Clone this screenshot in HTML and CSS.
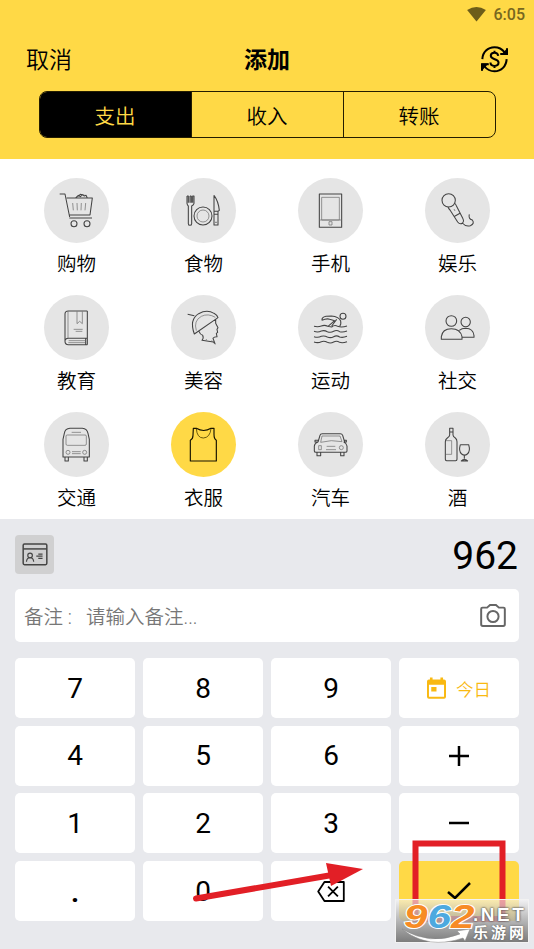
FILE: index.html
```html
<!DOCTYPE html>
<html lang="zh-CN">
<head>
<meta charset="utf-8">
<meta name="viewport" content="width=device-width">
<title>添加</title>
<link rel="stylesheet" href="styles.css">
</head>
<body>
<main class="app">
  <header class="header">
    <div class="status">
      <svg class="wifi" viewBox="0 0 20 16"><path d="M0 3.2Q10-3.2 20 3.2L10 15.5Z"/></svg>
      <span>6:05</span>
    </div>
    <div class="titlebar">
      <span class="cancel">取消</span>
      <h1>添加</h1>
      <svg class="currency" viewBox="0 0 80 80">
        <path d="M4 39C5 18 20 4 40 4c13 0 23 6 30 15M76 39c-1 21-16 36-36 36-13 0-23-6-30-15"/>
        <path d="M77 7v17H57M3 73V54h20"/>
        <path class="fill" d="M78 7v19H59zM2 74V52h20z"/>
        <path d="M51 29c-1-7-6-9-11-9-7 0-11 4-11 9 0 13 23 7 23 20 0 6-5 10-12 10s-12-4-12-10M40 14v7M40 58v7"/>
      </svg>
    </div>
    <nav class="tabs">
      <span class="tab active">支出</span>
      <span class="tab">收入</span>
      <span class="tab">转账</span>
    </nav>
  </header>

  <section class="categories">
    <div class="cat"><svg viewBox="43 25 195 195">
      <path d="M90 73h16l14 69M111 85h77l-7 51h-62M119 145h68M138 85l8-8 6 4 7-6 5 4 5-2 4 8M145 80l7-6 12 3"/>
      <path class="thin" d="M129 100l2 22M142 100l1 22M155 100l-1 22M168 100l-2 22"/>
      <circle cx="133" cy="162" r="9"/><circle cx="172" cy="162" r="9"/></svg><span>购物</span></div>
    <div class="cat"><svg viewBox="424 25 195 195">
      <path d="M472 79v22q1 6 4 8v53q0 5 5 5t5-5v-53q6-3 7-8V79h-4v20M472 79h4v20M481 79v20M485 79v20M481 79h4M553 77v89h12v-41h-11M553 77q13 17 16 45l-4 3M553 134h12"/>
      <circle cx="520" cy="139" r="27"/><circle class="thin" cx="520" cy="139" r="18"/><path d="M559 156v4"/></svg><span>食物</span></div>
    <div class="cat"><svg viewBox="24 25 195 195">
      <path d="M88 73h67v100H88z"/><path class="thin" d="M95 83h53v68H95zM88 151h67M117 156h9v10h-9z"/></svg><span>手机</span></div>
    <div class="cat"><svg viewBox="405 25 195 195">
      <circle cx="476" cy="92" r="20"/>
      <path d="M474 112q2 5 6 9l23 36q7 9 15 3 5-6 1-13l-20-39q-2-6-7-8M494 140l16-9M517 160q10 12 24 8 14-6 6-17-13-4-9-17"/><path class="thin" d="M492 118l3 6"/></svg><span>娱乐</span></div>

    <div class="cat"><svg viewBox="43 30 195 195">
      <path d="M173 78h-57q-10 0-10 9v82q0 10 10 10h57M173 78v82h-57q-10 1-10 9M173 160v19M168 161v17"/>
      <path class="thin" d="M115 79v81M117 167h50M116 173h50M142 79v37l8-7 8 7V79M132 133h27M138 139h20"/></svg><span>教育</span></div>
    <div class="cat"><svg viewBox="424 30 195 195">
      <path d="M474 88l20 4M494 147q-16-43 13-61 25-14 46-1 9 5 12 13zM508 139q3 9 11 12 4 8-2 15l34 5 5 5-6-16q3-5 12-5l-2-10 4-3-2-9 3-5-7-13v-12"/>
      <path class="thin" d="M500 137q-9-30 15-43 20-10 42 3M546 166l11 12M526 167l6-4"/></svg><span>美容</span></div>
    <div class="cat"><svg viewBox="24 30 195 195">
      <circle cx="159" cy="94" r="9"/>
      <path d="M96 106q-2-9 12-12l16-1q23 2 28 15 2 11-3 15M96 106q15-7 23-3l15 4-20 17M140 103l-15 20M72 124q12 3 22-1t19 1l12 2q9-8 18-2 12 4 28-1M72 139q12 4 22-1 9-3 18 2 10 4 19-1t18 1q9 3 22-2M72 155q12 4 22-1 9-3 18 2 10 4 19-1t18 1q9 3 22-2M72 171q12 4 22-1 9-3 18 2 10 4 19-1t18 1q9 3 22-2"/></svg><span>运动</span></div>
    <div class="cat"><svg viewBox="405 30 195 195">
      <circle cx="484" cy="108" r="16"/><circle cx="527" cy="111" r="14"/>
      <path d="M454 163v-8q3-24 30-24t32 24v8zM508 136q7-6 19-6 23 1 25 22v5h-35"/></svg><span>社交</span></div>

    <div class="cat"><svg viewBox="43 36 195 195">
      <path d="M100 171v-53l4-18q2-14 17-15h37q14 1 17 15l4 18v53zM106 172v11h10v-11M163 172v11h10v-11"/>
      <path class="thin" d="M109 108q0-3 4-3h53q4 0 4 3v24q0 4-4 4h-53q-4 0-4-4zM126 97h28M127 155h26M127 161h26"/><circle class="thin" cx="115" cy="157" r="6"/><circle class="thin" cx="165" cy="157" r="6"/></svg><span>交通</span></div>
    <div class="cat selected"><svg viewBox="424 36 195 195">
      <path d="M491 85h9q22 13 44 0h9v18q0 14 7 18v62h-78v-62q8-4 8-15z"/><path class="thin" d="M500 86q2 28 21 28 20-1 23-28"/></svg><span>衣服</span></div>
    <div class="cat"><svg viewBox="24 36 195 195">
      <path d="M84 126l6-20q1-5 7-5h54q5 0 7 5l6 20M84 126q-10 3-11 12v15q0 4 5 4h88q5 0 5-4v-15q-2-9-10-12M84 126h-9v-5h9M162 126h7v-5h-6M81 158v9h11v-9M152 158v9h10v-9"/>
      <path class="thin" d="M96 108h54l6 17q-32-7-64 2zM110 139h26M108 149h30M86 137h8v12h-8z"/><circle class="thin" cx="154" cy="143" r="6"/></svg><span>汽车</span></div>
    <div class="cat"><svg viewBox="405 36 195 195">
      <path d="M479 85h10v20q0 5 7 9 5 4 5 11v53q0 4-4 4h-27q-4 0-4-4v-53q0-7 6-11 7-4 7-9zM478 96h12M511 134h25q6 20-4 28-8 7-17 0-10-8-4-28M523 166v10M514 183q9-8 19 0z"/>
      <path class="thin" d="M468 122h17v41h-17"/></svg><span>酒</span></div>
  </section>

  <section class="panel">
    <div class="amount-row">
      <span class="account"><svg viewBox="0 0 78 70">
        <rect x="3" y="3" width="72" height="63" rx="4"/><path d="M3 18h72"/><g class="detail"><circle cx="24" cy="38" r="7"/><path d="M13 57q1-12 11-12t11 12M49 34h13M43 40h19M49 47h13"/></g></svg></span>
      <output class="amount">962</output>
    </div>
    <div class="note">
      <span class="note-label">备注 :</span><span class="note-hint">请输入备注...</span>
      <svg class="camera" viewBox="0 0 78 70"><path d="M7 11h14l9-8h18l9 8h14q4 0 4 4v47q0 5-5 5H8q-5 0-5-5V15q0-4 4-4z"/><circle cx="39" cy="38" r="17"/></svg>
    </div>
    <div class="keypad">
      <span class="key">7</span><span class="key">8</span><span class="key">9</span>
      <span class="key today"><svg viewBox="0 0 58 66"><path fill-rule="evenodd" d="M9 1h8v6h24V1h8v6h3q6 0 6 6v47q0 6-6 6H6q-6 0-6-6V13q0-6 6-6h3zM6 23v37h46V23zM13 30h16v14H13z"/></svg>今日</span>
      <span class="key">4</span><span class="key">5</span><span class="key">6</span>
      <span class="key"><svg class="sign" viewBox="0 0 20 20"><path d="M0 10h20M10 0v20"/></svg></span>
      <span class="key">1</span><span class="key">2</span><span class="key">3</span>
      <span class="key"><svg class="sign" viewBox="0 0 20 20"><path d="M0 10h20"/></svg></span>
      <span class="key dot">.</span><span class="key">0</span>
      <span class="key"><svg class="back" viewBox="0 0 84 64"><path d="M22 3h59v58H22L3 32zM33 17l30 30M63 17L33 47"/></svg></span>
      <span class="key done"><svg class="check" viewBox="0 0 24 18"><path d="M1 10l7 6L23 1"/></svg></span>
    </div>
  </section>

  <svg class="callout" viewBox="0 0 534 949">
    <path class="line" d="M196 898.500L332 875"/>
    <path class="head" d="M326 863l37 6-32 17z"/>
    <path class="frame" d="M415.500 843.500H502.500V919H415.500Z"/>
  </svg>
  <div class="brand">
    <div class="brand-num"><span>9</span><span class="blue">6</span><span>2</span></div>
    <div class="brand-net">.NET</div>
    <div class="brand-name">乐游网</div>
    <svg class="swoosh" viewBox="0 0 70 16"><path d="M0 1q28 17 58 5l-3-3 13-2-5 12-2-3Q26 22 0 1z"/></svg>
  </div>
</main>
</body>
</html>
```
FILE: styles.css
```css
* { box-sizing: border-box; }
body {
  margin: 0;
  background: #fff;
  color: #000;
  font-family: Roboto, "Noto Sans CJK SC", sans-serif;
}
svg { display: block; fill: none; stroke: currentColor; }
.app {
  position: relative;
  width: 534px;
  height: 949px;
  overflow: hidden;
  display: flex;
  flex-direction: column;
}

.header { height: 159px; flex: none; background: #ffd946; }
.status {
  height: 28px;
  padding: 0 9px 0 0;
  display: flex;
  justify-content: flex-end;
  align-items: center;
  gap: 8px;
  color: #776720;
  font-size: 16px;
  font-weight: 500;
}
.wifi { width: 19px; height: 15px; fill: #6d5d19; stroke: none; }
.titlebar {
  height: 63px;
  padding: 0 26px;
  display: grid;
  grid-template-columns: 1fr auto 1fr;
  align-items: center;
  font-size: 23px;
}
.cancel { font-weight: 350; padding-bottom: 4px; }
.titlebar h1 { margin: 0; padding-bottom: 4px; font-size: 23px; font-weight: 700; }
.currency { width: 27px; height: 27px; justify-self: end; stroke-width: 6; }
.currency .fill { fill: currentColor; stroke: none; }
.tabs {
  width: 457px;
  height: 47px;
  margin-left: 38.500px;
  display: flex;
  border: 1px solid #241d00;
  border-radius: 8px;
  overflow: hidden;
  font-size: 20.500px;
  font-weight: 350;
}
.tab {
  flex: 1;
  display: flex;
  align-items: center;
  justify-content: center;
}
.tab + .tab { border-left: 1px solid #241d00; }
.tab.active { background: #000; color: #ffd946; }

.categories {
  height: 360px;
  flex: none;
  padding: 19px 13px 0;
  display: grid;
  grid-template-columns: repeat(4, 127px);
  grid-auto-rows: 117px;
}
.cat {
  display: flex;
  flex-direction: column;
  align-items: center;
  font-size: 19.500px;
  font-weight: 350;
  line-height: 28px;
}
.cat span { margin-top: 8px; }
.cat svg {
  width: 65px;
  height: 65px;
  border-radius: 50%;
  background: #e5e5e5;
  stroke: #444;
  stroke-width: 3.200;
  stroke-linejoin: round;
}
.cat .thin { stroke-width: 2.200; stroke: #707070; }
.cat.selected svg { background: #ffd946; stroke: #171300; stroke-width: 3.500; }
.cat.selected .thin { stroke: #4d4100; stroke-width: 2.500; }

.panel { flex: 1; padding: 15px 15px 0; background: #e8e9ed; }
.amount-row { height: 40px; display: flex; justify-content: space-between; align-items: center; }
.account {
  width: 39px;
  height: 39px;
  border-radius: 4px;
  background: #d0d0d1;
  display: grid;
  place-items: center;
}
.account svg { width: 26px; height: 23px; color: #444; stroke-width: 4.500; }
.account .detail { stroke-width: 3.500; }
.amount { font-size: 39px; line-height: 40px; padding: 4px 1px 0 0; }
.note {
  height: 53px;
  margin-top: 15px;
  padding: 0 13px 0 9px;
  display: flex;
  align-items: center;
  border-radius: 5px;
  background: #fff;
  color: #777;
  font-size: 19.500px;
  font-weight: 350;
}
.note-label { width: 62px; white-space: nowrap; }
.camera { width: 26px; height: 23px; margin-left: auto; color: #666; stroke-width: 6; }
.keypad {
  margin-top: 16px;
  display: grid;
  grid-template-columns: repeat(4, 120px);
  grid-auto-rows: 60px;
  gap: 7.700px 8px;
}
.key {
  display: flex;
  align-items: center;
  justify-content: center;
  border-radius: 5px;
  background: #fff;
  font-size: 28px;
}
.dot { padding-top: 3px; font-weight: 700; }
.today { gap: 10px; color: #f9b912; font-size: 17.500px; font-weight: 350; }
.today svg { width: 19px; height: 22px; fill: #f9b912; stroke: none; }
.sign { width: 20px; height: 20px; stroke-width: 2.500; }
.back { width: 28px; height: 21px; stroke-width: 5.500; stroke-linejoin: round; }
.check { width: 24px; height: 18px; stroke-width: 2.500; }
.done { background: #ffd946; }

.callout { position: absolute; left: 0; top: 0; width: 534px; height: 949px; stroke: #e21f26; }
.callout .line { stroke-width: 6; stroke-linecap: round; }
.callout .head { fill: #e21f26; stroke: none; }
.callout .frame { stroke-width: 6; }

.brand {
  position: absolute;
  left: 395px;
  top: 899px;
  width: 134px;
  height: 44px;
  border: 1px solid #f2f2f2;
  background: linear-gradient(rgba(245, 245, 245, .6), rgba(165, 165, 165, .85) 55%, rgba(120, 120, 120, .96));
  color: #fff;
  font-family: "Liberation Sans", "Noto Sans CJK SC", sans-serif;
  font-weight: 700;
}
.brand-num, .brand-net, .brand-name, .swoosh { position: absolute; }
.brand-num {
  left: 8px;
  top: 1px;
  font-size: 34px;
  line-height: 30px;
  font-style: italic;
  color: #f78b25;
  transform: scaleX(1.240);
  transform-origin: 0 0;
  -webkit-text-stroke: 2px #fff;
  paint-order: stroke fill;
}
.brand-num .blue { color: #4da9df; }
.brand-net {
  left: 77px;
  top: 5px;
  font-size: 19px;
  line-height: 20px;
  letter-spacing: 2.500px;
  text-shadow: 0 0 2px #444, 0 0 2px #666;
}
.brand-name { left: 77px; top: 24px; font-size: 15px; line-height: 18px; letter-spacing: 3px; white-space: nowrap; text-shadow: 0 0 2px #555; }
.swoosh { left: 6px; top: 28px; width: 70px; height: 16px; fill: #fff; stroke: #888; stroke-width: .5; }
```
